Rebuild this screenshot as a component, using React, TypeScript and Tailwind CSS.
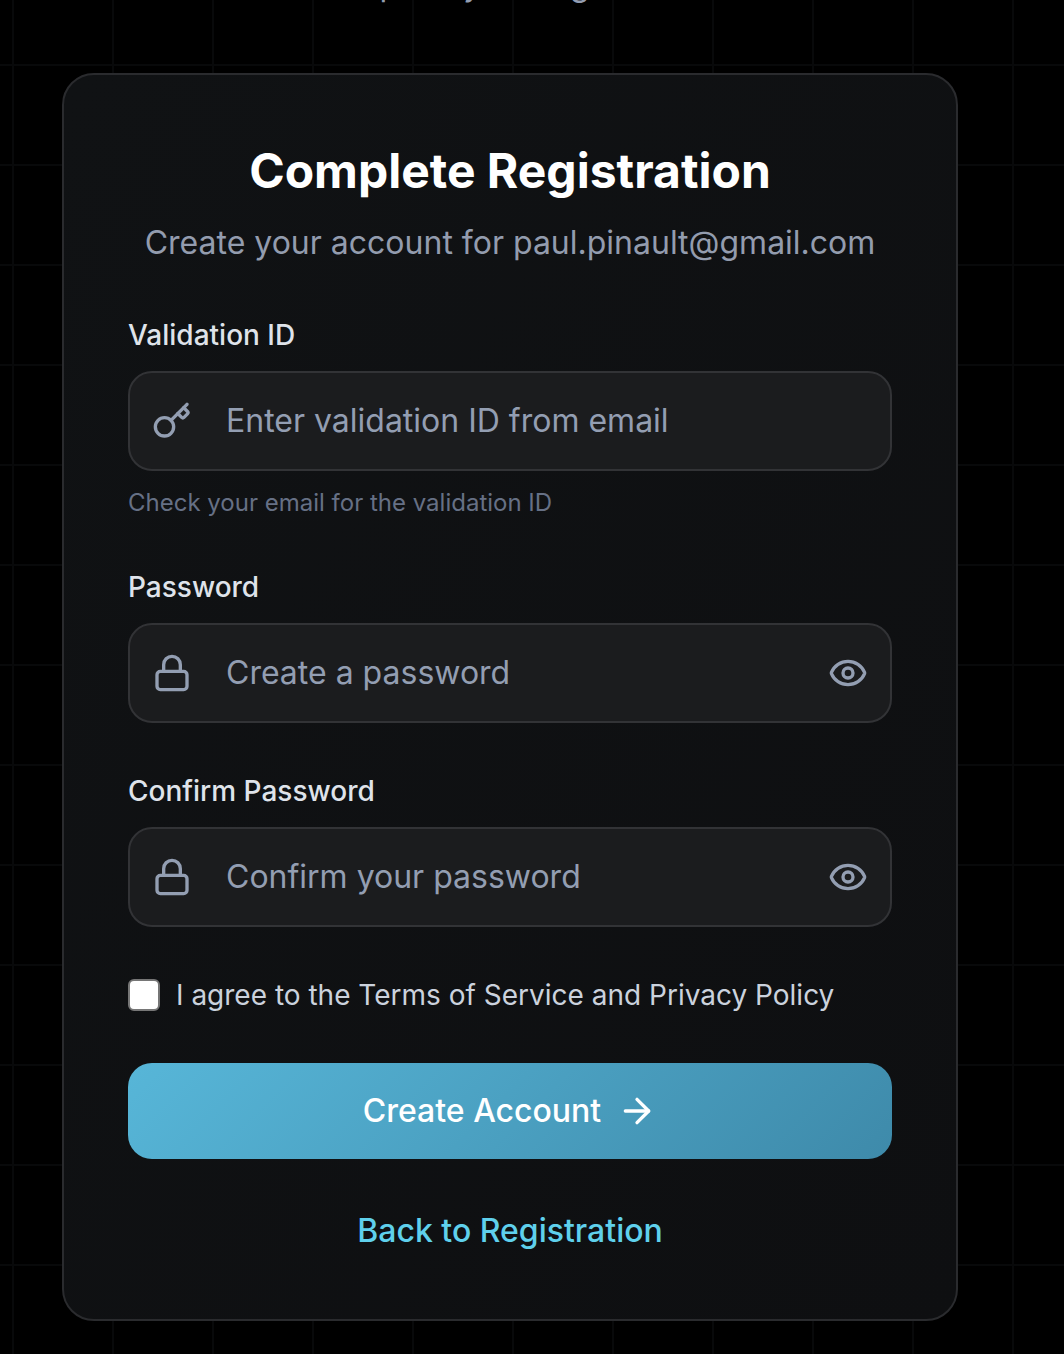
import { ArrowRight, Eye, Key, Lock } from "lucide-react"

function Field({ label, placeholder, icon, eye }: { label: string; placeholder: string; icon: React.ReactNode; eye?: boolean }) {
  return (
    <div>
      <label className="block text-[28px] leading-[40px] font-medium text-[#dfe3ea] mb-4">{label}</label>
      <div className="h-[100px] flex items-center rounded-[24px] border-2 border-[#323336] bg-[#1b1c1e] px-[22px]">
        <span className="w-[40px] shrink-0 text-[#939eb2]">{icon}</span>
        <span className="ml-[34px] flex-1 text-[32px] text-[#939eb2]">{placeholder}</span>
        {eye && <Eye size={40} strokeWidth={2} className="text-[#939eb2]" />}
      </div>
    </div>
  )
}

export default function App() {
  return (
    <div className="h-[1354px] overflow-hidden bg-black bg-[linear-gradient(to_right,#08090a_2px,transparent_2px),linear-gradient(to_bottom,#08090a_2px,transparent_2px)] bg-[size:100px_100px] bg-[position:12px_64px] font-['Inter',sans-serif]">
      <div className="w-[1020px]">
        <p className="-mt-[35px] h-[108px] text-center text-[32px] leading-[40px] text-[#939eb2]">Complete your registration</p>
        <div className="mx-[62px] h-[1248px] w-[896px] rounded-[32px] border-2 border-[#2a2b2e] bg-gradient-to-br from-[#101214] to-[#0e0f11] px-[64px] pt-[64px]">
          <h1 className="text-center text-[48px] leading-[64px] font-bold text-white">Complete Registration</h1>
          <p className="mt-[16px] text-center text-[32px] leading-[48px] text-[#939cae]">Create your account for paul.pinault@gmail.com</p>
          <div className="mt-[48px]">
            <Field label="Validation ID" placeholder="Enter validation ID from email" icon={<Key size={40} strokeWidth={2} />} />
            <p className="mt-[16px] text-[24px] leading-[32px] text-[#667085]">Check your email for the validation ID</p>
          </div>
          <div className="mt-[48px]">
            <Field label="Password" placeholder="Create a password" icon={<Lock size={40} strokeWidth={2} />} eye />
          </div>
          <div className="mt-[48px]">
            <Field label="Confirm Password" placeholder="Confirm your password" icon={<Lock size={40} strokeWidth={2} />} eye />
          </div>
          <div className="mt-[48px] flex items-center">
            <span className="h-[32px] w-[32px] rounded-[6px] border-2 border-[#767676] bg-white" />
            <span className="ml-[16px] text-[28px] leading-[40px] text-[#cbd2dd]">I agree to the Terms of Service and Privacy Policy</span>
          </div>
          <button className="mt-[48px] flex h-[96px] w-full items-center justify-center gap-[16px] rounded-[24px] bg-[linear-gradient(135deg,#57b6d8,#3e8aaa)] text-[32px] font-medium text-white">
            Create Account <ArrowRight size={40} strokeWidth={2} />
          </button>
          <p className="mt-[48px] text-center text-[32px] leading-[48px] font-medium text-[#5fd0ec]">Back to Registration</p>
        </div>
      </div>
    </div>
  )
}
